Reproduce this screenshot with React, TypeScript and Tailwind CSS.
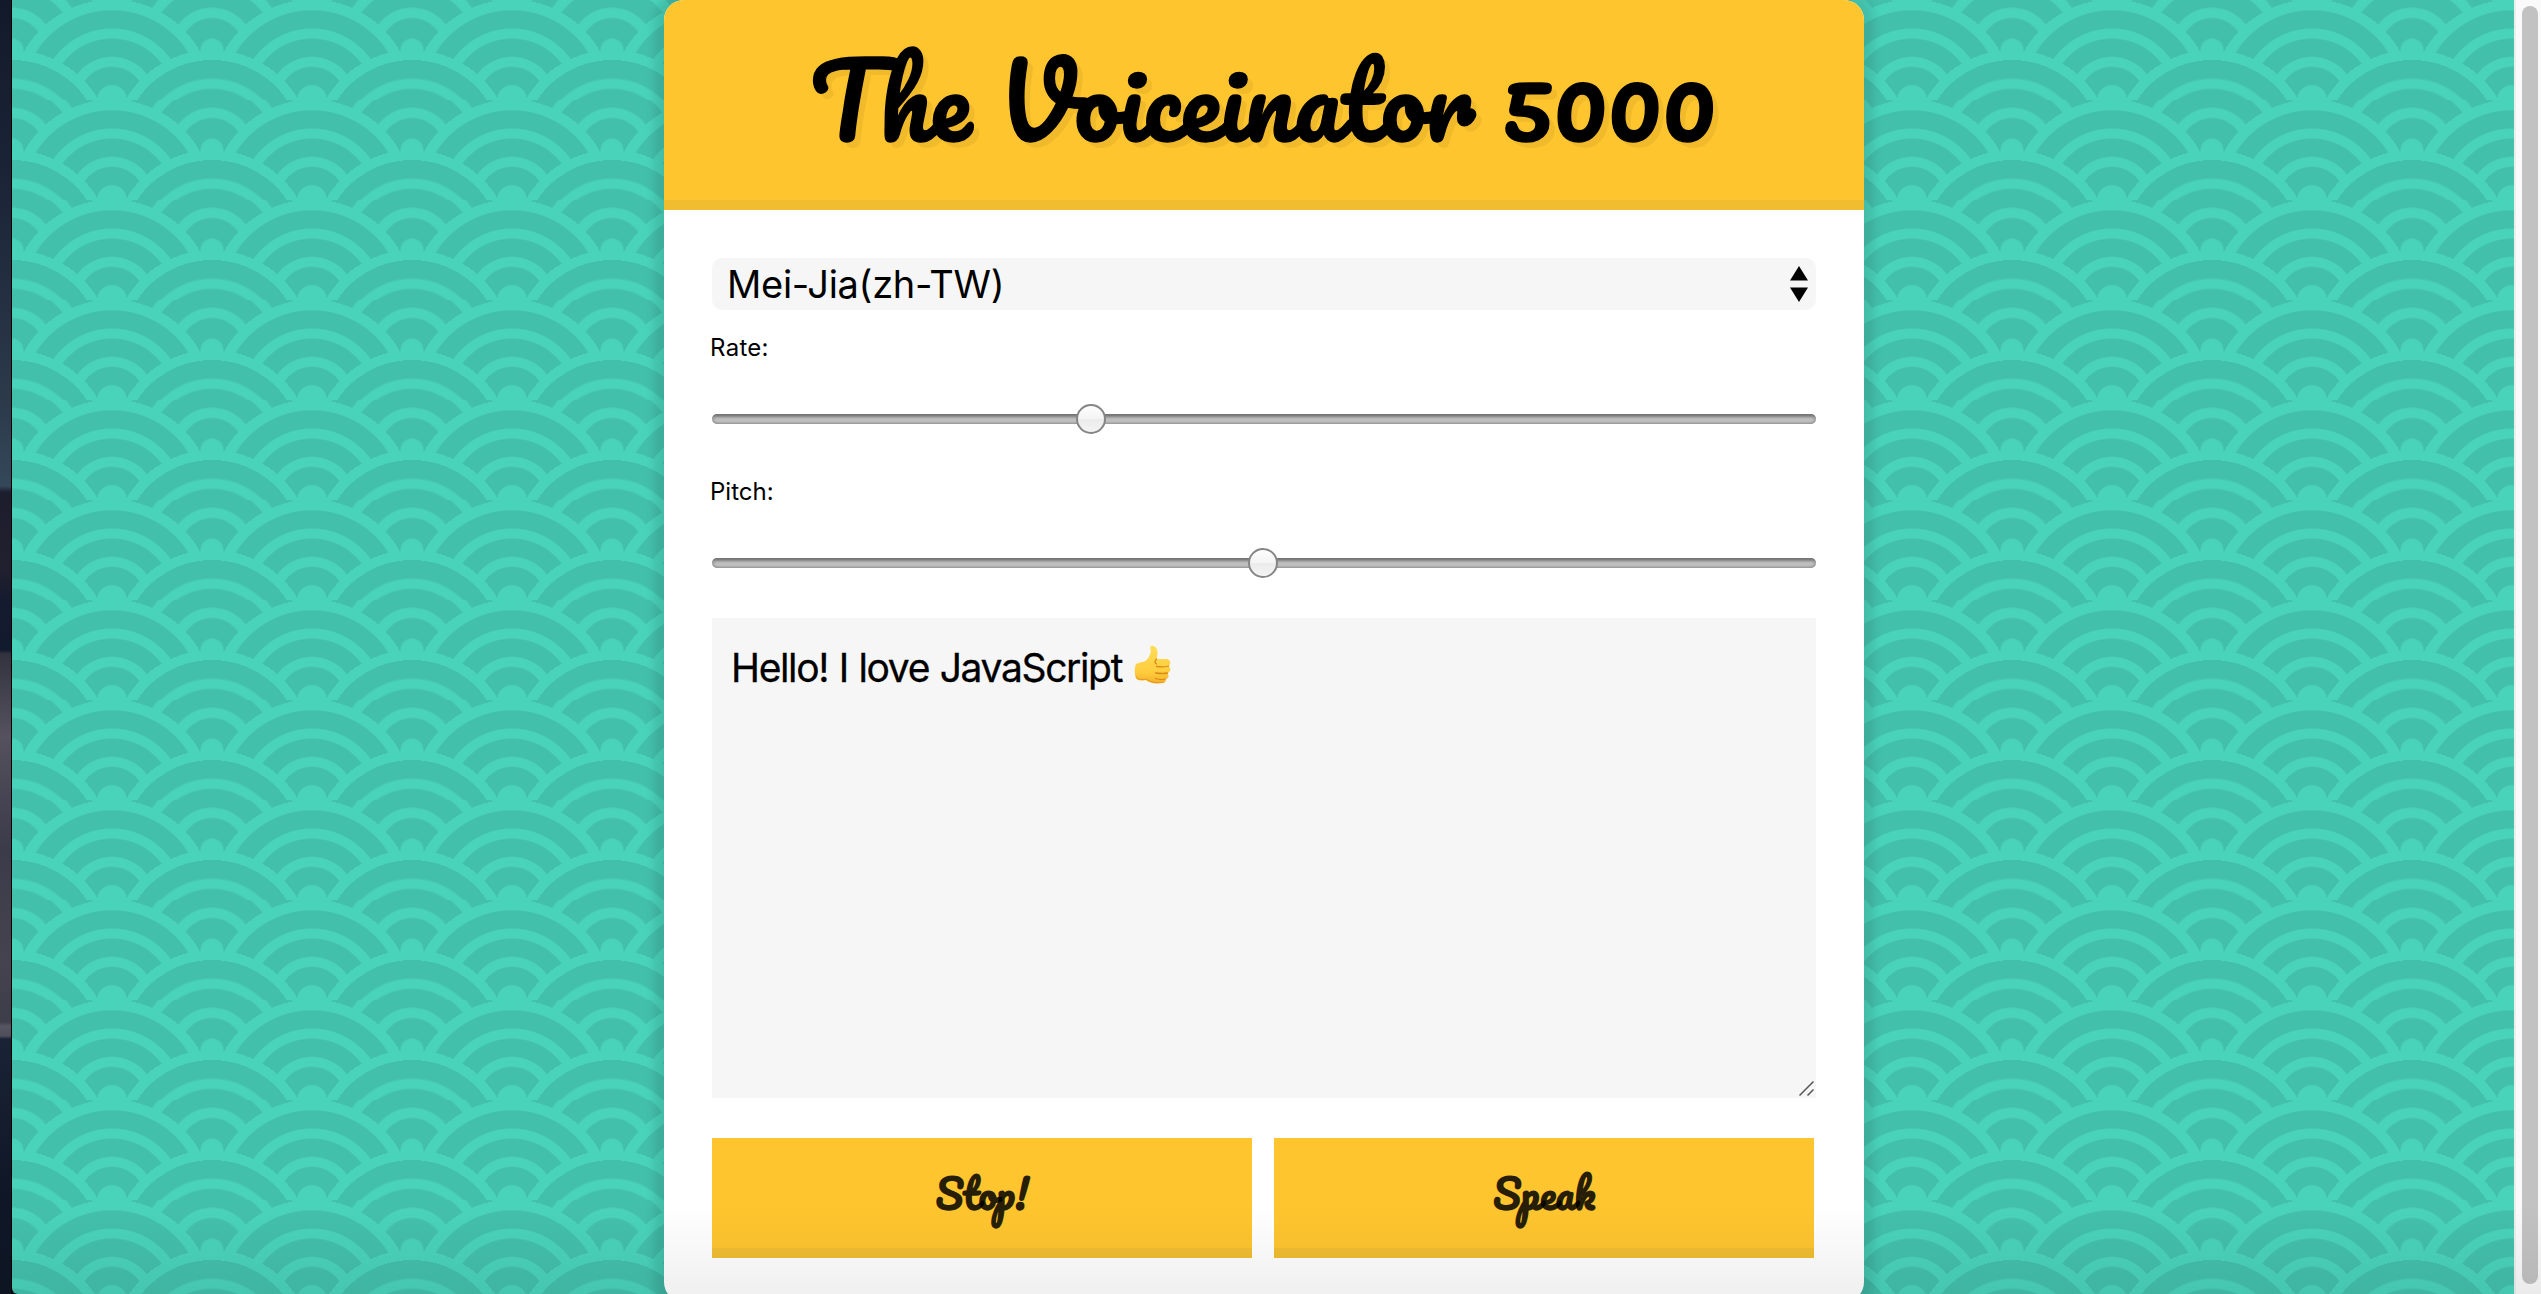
const seigaiha = {
  backgroundColor: "#43c0ac",
  backgroundSize: "200px 100px",
  backgroundImage: [
    "radial-gradient(circle at 100% 150%, #43c0ac 24%, #4ad3bb 25%, #4ad3bb 28%, #43c0ac 29%, #43c0ac 36%, #4ad3bb 36%, #4ad3bb 40%, transparent 40%, transparent)",
    "radial-gradient(circle at 0 150%, #43c0ac 24%, #4ad3bb 25%, #4ad3bb 28%, #43c0ac 29%, #43c0ac 36%, #4ad3bb 36%, #4ad3bb 40%, transparent 40%, transparent)",
    "radial-gradient(circle at 50% 100%, #4ad3bb 10%, #43c0ac 11%, #43c0ac 23%, #4ad3bb 24%, #4ad3bb 30%, #43c0ac 31%, #43c0ac 43%, #4ad3bb 44%, #4ad3bb 50%, #43c0ac 51%, #43c0ac 63%, #4ad3bb 64%, #4ad3bb 71%, transparent 71%, transparent)",
    "radial-gradient(circle at 100% 50%, #4ad3bb 5%, #43c0ac 6%, #43c0ac 15%, #4ad3bb 16%, #4ad3bb 20%, #43c0ac 21%, #43c0ac 30%, #4ad3bb 31%, #4ad3bb 35%, #43c0ac 36%, #43c0ac 45%, #4ad3bb 46%, #4ad3bb 49%, transparent 50%, transparent)",
    "radial-gradient(circle at 0 50%, #4ad3bb 5%, #43c0ac 6%, #43c0ac 15%, #4ad3bb 16%, #4ad3bb 20%, #43c0ac 21%, #43c0ac 30%, #4ad3bb 31%, #4ad3bb 35%, #43c0ac 36%, #43c0ac 45%, #4ad3bb 46%, #4ad3bb 49%, transparent 50%, transparent)",
  ].join(", "),
};

const desktop = {
  backgroundImage:
    "linear-gradient(to bottom, #12192a 0px, #1c2638 200px, #2c3a4a 400px, #34485a 486px, #1d1e2d 492px, #20202e 570px, #151b2e 600px, #121a2d 650px, #32333f 654px, #55515f 735px, #3c3b49 850px, #45434f 960px, #3d3e4a 1022px, #555661 1026px, #4c4e59 1036px, #1a2335 1039px, #101828 1180px, #0d1422 1294px)",
};

function Slider({ value }: { value: number }) {
  return (
    <div className="relative h-[10px] w-full rounded-[5px] bg-[linear-gradient(to_bottom,#6e6e6e_0px,#858585_2px,#b2b2b2_4px,#c2c2c2_6px,#b8b8b8_8px,#a3a3a3_10px)] shadow-[inset_2px_0_2px_#80808080,inset_-2px_0_2px_#80808080]">
      <div
        className="absolute -top-[10px] size-[30px] -translate-x-1/2 rounded-full border-2 border-[#858585] bg-[linear-gradient(to_bottom,#fdfdfd_0%,#f4f4f4_50%,#ebebeb_52%,#f4f4f4_100%)]"
        style={{ left: `${value}px` }}
      />
    </div>
  );
}

function ThumbsUp() {
  return (
    <svg className="absolute top-[27px] left-[422px] h-[39px] w-[37px]" viewBox="0 0 36 39" role="img" aria-label="thumbs up">
      <defs>
        <linearGradient id="skin" x1="0" y1="0" x2="0" y2="1">
          <stop offset="0" stopColor="#ffdd56" />
          <stop offset="0.7" stopColor="#fecd3e" />
          <stop offset="1" stopColor="#f3b02a" />
        </linearGradient>
      </defs>
      <path
        d="M1 20C2 17 9 18 12 15C15 12 17 8 16 4C15 1 17 0 19 1C23 2 24 8 22 14L32 14C36 14 37 19 34 21C37 23 36 27 33 28C35 31 34 34 31 34C32 37 30 38 27 38C20 39 15 38 11 35C7 36 2 36 1 32C0 28 0 24 1 20Z"
        fill="url(#skin)"
      />
      <path
        d="M34 21C30 22.500 26 22 22 21.500M33 28C29 29 25 28.500 21 28M31 34C28 35 24 34.500 21 33.500M22 14C20 16 20 18 22 19"
        fill="none"
        stroke="#d98b18"
        strokeWidth="1.300"
        strokeLinecap="round"
      />
      <path d="M1.500 31C3 35 8 35 12 34C17 38 24 38 29 37.500" fill="none" stroke="#d98b18" strokeWidth="1" opacity="0.7" />
    </svg>
  );
}

function ActionButton({ label }: { label: string }) {
  return (
    <button className="flex h-[120px] w-[540px] items-start justify-center border-b-[10px] border-[#f1bd30] bg-[#fec52e] pt-[27px] font-[Pacifico,cursive] text-[40px] leading-[56px] font-bold text-black/85">
      {label}
    </button>
  );
}

export default function App() {
  return (
    <div className="relative flex h-[1294px] w-[2541px] overflow-hidden bg-[#0d1422] text-black">
      <div className="w-[12px] shrink-0 border-r border-black" style={desktop} />

      <main className="flex w-[2502px] shrink-0 items-start rounded-bl-[6px] pl-[652px]" style={seigaiha}>
        <section className="h-[1302px] w-[1200px] shrink-0 overflow-hidden rounded-[20px] bg-white shadow-[0_0_10px_10px_rgba(0,0,0,0.1)]">
          <header className="flex h-[210px] justify-center border-b-[10px] border-[#f1bd30] bg-[#fec52e]">
            <h1 className="pt-[30px] pr-[2px] font-[Pacifico,cursive] text-[100px] leading-[140px] font-normal whitespace-nowrap [-webkit-text-stroke:1.3px_black] [text-shadow:6px_6px_0_rgba(0,0,0,0.05)]">
              The Voiceinator 5000
            </h1>
          </header>

          <div className="flex flex-col px-[48px] pt-[48px] font-[Inter]">
            <div className="flex h-[52px] items-center justify-between rounded-[10px] bg-[#f6f6f6] pr-[8px] pl-[15px]">
              <span className="text-[38px] leading-[52px] tracking-[-0.3px]">Mei-Jia(zh-TW)</span>
              <svg className="h-[36px] w-[18px]" viewBox="0 0 18 36">
                <path d="M9 0L18 14.500H0ZM0 21.500H18L9 36Z" fill="#000" />
              </svg>
            </div>

            <label className="mt-[21px] -ml-[2px] text-[24px] leading-[34px] tracking-[0.300px]">Rate:</label>
            <div className="mt-[49px]">
              <Slider value={379} />
            </div>

            <label className="mt-[51px] -ml-[2px] text-[24px] leading-[34px]">Pitch:</label>
            <div className="mt-[49px]">
              <Slider value={551} />
            </div>

            <div className="relative mt-[50px] h-[480px] bg-[#f6f6f6] pt-[26px] pl-[19px]">
              <span className="block text-[39px] leading-[48px] tracking-[-1.350px] [word-spacing:1px] whitespace-nowrap [-webkit-text-stroke:0.3px_black]">Hello! I love JavaScript</span>
              <ThumbsUp />
              <svg className="absolute right-[2px] bottom-[2px] size-[15px]" viewBox="0 0 15 15">
                <path d="M0.500 14.500L14.500 0.500M8.500 14.500L14.500 8.500" fill="none" stroke="#555" strokeWidth="1.500" />
              </svg>
            </div>

            <div className="mt-[40px] flex gap-[22px]">
              <ActionButton label="Stop!" />
              <ActionButton label="Speak" />
            </div>
          </div>
        </section>
      </main>

      <aside className="w-[27px] shrink-0 border-l-2 border-[#ededed] bg-[#fafafa] pt-[6px] pl-[6px]">
        <div className="h-[1278px] w-[16px] rounded-full bg-[#c2c2c2]" />
      </aside>

      <div className="pointer-events-none absolute right-0 bottom-0 left-[12px] h-[90px] bg-linear-to-b from-transparent to-black/[0.06]" />
    </div>
  );
}
